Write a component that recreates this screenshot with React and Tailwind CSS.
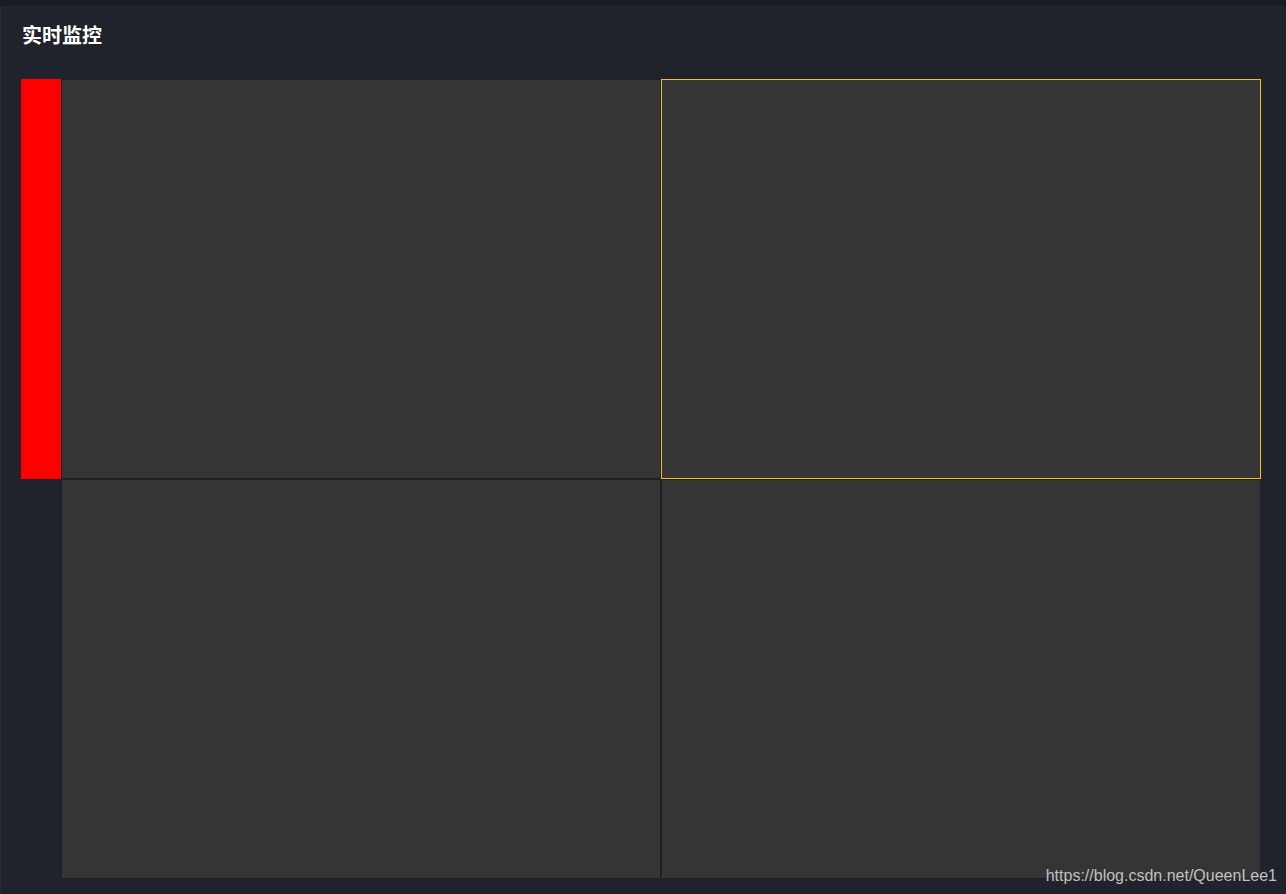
export default function App() {
  const cells = [
    { id: 1, active: false },
    { id: 2, active: true },
    { id: 3, active: false },
    { id: 4, active: false },
  ];

  return (
    <div className="relative w-[1286px] h-[894px] overflow-hidden bg-[#1a1c21] font-['Liberation_Sans','Noto_Sans_CJK_SC',sans-serif]">
      <div className="mt-[6px] h-[888px] border-l border-[#2a2d35] bg-[#20232b]">
        <h2 className="pl-[21px] pt-[19px] h-[73px] text-[20px] leading-[22px] font-bold text-white font-['Liberation_Serif','Noto_Sans_CJK_SC',serif]">
          实时监控
        </h2>
        <div className="flex pl-[20px]">
          <div className="w-[40px] h-[400px] bg-[#ff0000]" />
          <div className="grid grid-cols-[600px_600px] grid-rows-[400px_400px]">
            {cells.map((c) => (
              <div
                key={c.id}
                className={
                  c.active
                    ? 'border border-[#f7c200] bg-[#353535]'
                    : 'border border-[#1e2026] bg-[#353535]'
                }
              />
            ))}
          </div>
        </div>
      </div>
      <span className="absolute right-[9px] bottom-[9px] text-[16px] leading-[18px] text-[#c0c0c0] font-['Liberation_Sans',sans-serif]">
        https://blog.csdn.net/QueenLee1
      </span>
    </div>
  );
}
